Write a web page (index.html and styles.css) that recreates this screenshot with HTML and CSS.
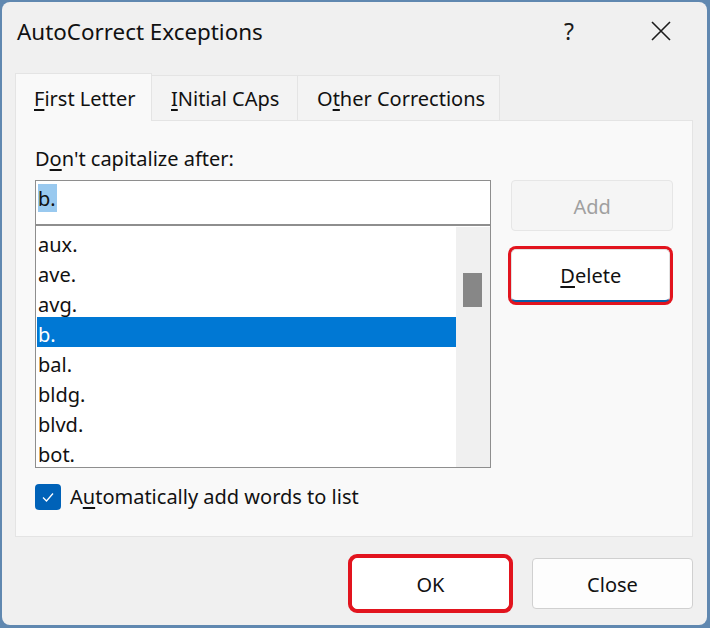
FILE: index.html
```html
<!DOCTYPE html>
<html>
<head>
<meta charset="utf-8">
<link rel="stylesheet" href="styles.css">
</head>
<body>
<div class="dialog">
  <div class="titlebar">
    <div class="title">AutoCorrect Exceptions</div>
    <div class="tbtn help">?</div>
    <div class="tbtn close">
      <svg width="20" height="20" viewBox="0 0 20 20"><path d="M1 1 L19 19 M19 1 L1 19" stroke="#1b1b1b" stroke-width="1.6" fill="none"/></svg>
    </div>
  </div>
  <div class="tabs">
    <div class="tab active t1"><u>F</u>irst Letter</div>
    <div class="tab t2"><u>I</u>Nitial CAps</div>
    <div class="tab t3">O<u>t</u>her Corrections</div>
  </div>
  <div class="panel">
    <div class="label">D<u>o</u>n't capitalize after:</div>
    <div class="body">
      <div class="leftcol">
        <div class="input"><span class="sel">b.</span></div>
        <div class="list">
          <div class="rows">
            <div class="row">aux.</div>
            <div class="row">ave.</div>
            <div class="row">avg.</div>
            <div class="row selected">b.</div>
            <div class="row">bal.</div>
            <div class="row">bldg.</div>
            <div class="row">blvd.</div>
            <div class="row">bot.</div>
          </div>
          <div class="scrollbar"><div class="thumb"></div></div>
        </div>
      </div>
      <div class="rightcol">
        <div class="btn disabled">Add</div>
        <div class="btn default marked"><u>D</u>elete</div>
      </div>
    </div>
    <div class="check">
      <div class="box">
        <svg width="14" height="14" viewBox="0 0 14 14"><path d="M2 7.5 L5.5 11 L12 3.5" stroke="#fff" stroke-width="1.3" fill="none"/></svg>
      </div>
      <div class="checklabel">A<u>u</u>tomatically add words to list</div>
    </div>
  </div>
  <div class="footer">
    <div class="btn ok marked2">OK</div>
    <div class="btn closebtn">Close</div>
  </div>
</div>
</body>
</html>
```
FILE: styles.css
```css
* { box-sizing: border-box; }
html, body { margin: 0; padding: 0; }
body {
  background: #6088b0;
  width: 710px;
  height: 628px;
  overflow: hidden;
  font-family: "Noto Sans", "Open Sans", sans-serif;
  color: #111;
}
u { text-decoration-thickness: 1.5px; text-underline-offset: 3px; }
.dialog {
  margin: 2px 0 0 2px;
  width: 705px;
  height: 623px;
  background: #f0f0f0;
  border-radius: 8px;
  display: flex;
  flex-direction: column;
}
.titlebar {
  height: 58px;
  display: flex;
  align-items: center;
  padding-left: 15px;
}
.title { flex: 1; font-size: 22.4px; }
.tbtn {
  width: 92px;
  height: 58px;
  display: flex;
  align-items: center;
  justify-content: center;
}
.help { font-size: 23px; color: #1b1b1b; }
.tabs {
  margin: 13px 0 0 13px;
  height: 47px;
  display: flex;
  align-items: flex-end;
}
.tab {
  height: 45px;
  padding: 11px 0 0 19px;
  line-height: 24px;
  font-size: 20px;
  white-space: nowrap;
  background: #f3f3f3;
  border: 1px solid #e4e4e4;
  border-bottom: none;
  border-left: none;
}
.t1 { width: 137px; }
.t2 { width: 146px; }
.t3 { width: 202px; }
.tab.active {
  height: 48px;
  padding-top: 13px;
  padding-left: 18px;
  margin-bottom: -1px;
  background: #f9f9f9;
  border-left: 1px solid #e4e4e4;
  position: relative;
  z-index: 1;
}
.panel {
  margin-left: 13px;
  width: 678px;
  height: 417px;
  background: #f9f9f9;
  border: 1px solid #e4e4e4;
  padding: 26px 19px 0 19px;
}
.label { font-size: 20px; line-height: 24px; }
.body {
  margin-top: 9px;
  display: flex;
  gap: 20px;
}
.leftcol { width: 457px; }
.input {
  height: 45px;
  background: #fff;
  border: 1px solid #8e8e8e;
  padding: 3px 2px 0 2px;
  font-size: 20px;
  line-height: 29px;
}
.sel { background: #99c9ef; padding: 1px 1px 0 0; }
.list {
  height: 243px;
  background: #fff;
  border: 1px solid #8e8e8e;
  display: flex;
  padding: 1px 0 0 1px;
  overflow: hidden;
}
.rows { flex: 1; }
.row {
  height: 30px;
  line-height: 30px;
  font-size: 20px;
  padding: 3px 0 0 1px;
}
.row.selected { background: #0078d4; color: #fff; }
.scrollbar {
  width: 34px;
  height: 240px;
  background: #f0f0f0;
  padding: 46px 0 0 7px;
}
.thumb { width: 19px; height: 34px; background: #878787; }
.rightcol { width: 162px; display: flex; flex-direction: column; }
.btn {
  height: 51px;
  display: flex;
  align-items: center;
  justify-content: center;
  font-size: 20px;
  padding-top: 2px;
  background: #fdfdfd;
  border: 1px solid #d0d0d0;
  border-radius: 4px;
}
.btn.disabled {
  background: #f5f5f5;
  border-color: #e6e6e6;
  color: #a0a0a0;
}
.btn.default {
  margin-top: 18px;
  width: 159px;
  height: 53px;
  padding-top: 0;
  background: #fff;
  border-color: #e2e2e2;
  border-bottom: 2px solid #0a5ea8;
}
.marked { box-shadow: 0 0 0 3px #e2141e; border-radius: 5px; }
.check {
  margin-top: 15px;
  display: flex;
  align-items: center;
  gap: 9px;
}
.box {
  width: 26px;
  height: 26px;
  border-radius: 4px;
  background: #0062b8;
  display: flex;
  align-items: center;
  justify-content: center;
}
.checklabel { font-size: 20px; }
.footer {
  margin-top: 21px;
  display: flex;
  justify-content: flex-end;
  gap: 23px;
  padding-right: 14px;
}
.ok { width: 157px; background: #fff; border-color: #fff; }
.marked2 { box-shadow: 0 0 0 4px #e2141e; border-radius: 5px; }
.closebtn { width: 161px; }
```
